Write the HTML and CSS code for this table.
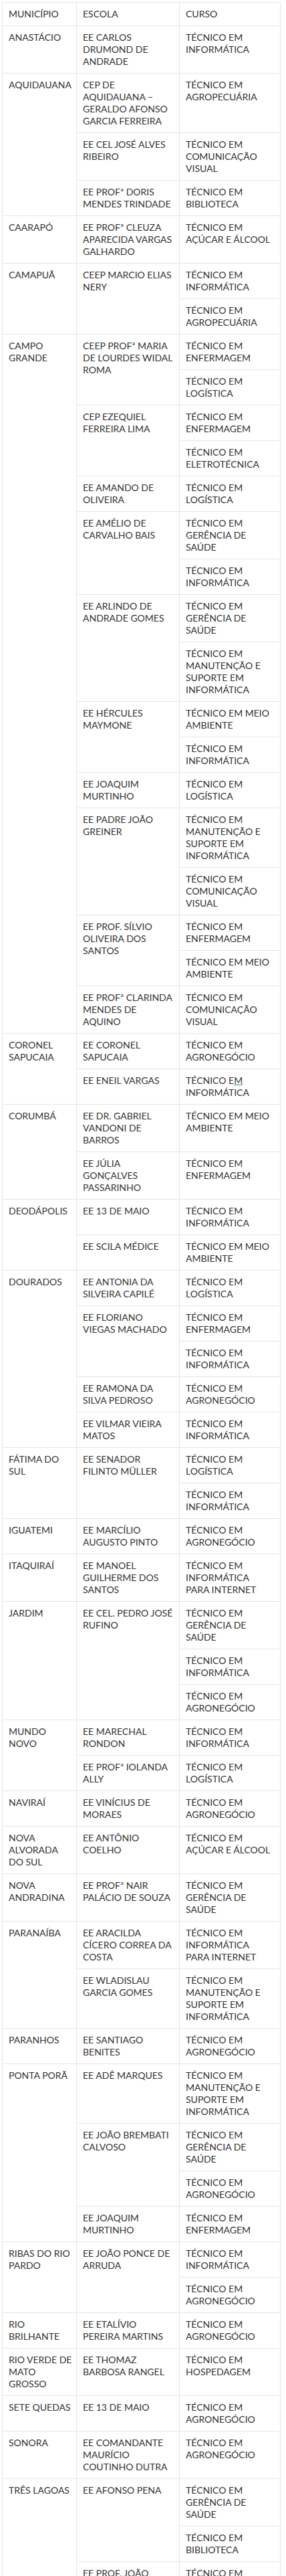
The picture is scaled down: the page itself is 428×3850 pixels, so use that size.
FILE: index.html
```html
<!DOCTYPE html>
<html lang="pt-BR">
<head>
<meta charset="utf-8">
<title>Cursos técnicos</title>
<link rel="stylesheet" href="styles.css">
</head>
<body>
<div class="wrap">
<table class="cursos">
<colgroup><col class="c1"><col class="c2"><col class="c3"></colgroup>
<tbody>
<tr><td>MUNICÍPIO</td><td>ESCOLA</td><td>CURSO</td></tr>
<tr><td>ANASTÁCIO</td><td>EE CARLOS<br>DRUMOND DE<br>ANDRADE</td><td>TÉCNICO EM<br>INFORMÁTICA</td></tr>
<tr><td rowspan="3">AQUIDAUANA</td><td>CEP DE<br>AQUIDAUANA –<br>GERALDO AFONSO<br>GARCIA FERREIRA</td><td>TÉCNICO EM<br>AGROPECUÁRIA</td></tr>
<tr><td>EE CEL JOSÉ ALVES<br>RIBEIRO</td><td>TÉCNICO EM<br>COMUNICAÇÃO<br>VISUAL</td></tr>
<tr><td>EE PROFª DORIS<br>MENDES TRINDADE</td><td>TÉCNICO EM<br>BIBLIOTECA</td></tr>
<tr><td>CAARAPÓ</td><td>EE PROFª CLEUZA<br>APARECIDA VARGAS<br>GALHARDO</td><td>TÉCNICO EM<br>AÇÚCAR E ÁLCOOL</td></tr>
<tr><td rowspan="2">CAMAPUÃ</td><td rowspan="2">CEEP MARCIO ELIAS<br>NERY</td><td>TÉCNICO EM<br>INFORMÁTICA</td></tr>
<tr><td>TÉCNICO EM<br>AGROPECUÁRIA</td></tr>
<tr><td rowspan="17">CAMPO<br>GRANDE</td><td rowspan="2">CEEP PROFª MARIA<br>DE LOURDES WIDAL<br>ROMA</td><td>TÉCNICO EM<br>ENFERMAGEM</td></tr>
<tr><td>TÉCNICO EM<br>LOGÍSTICA</td></tr>
<tr><td rowspan="2">CEP EZEQUIEL<br>FERREIRA LIMA</td><td>TÉCNICO EM<br>ENFERMAGEM</td></tr>
<tr><td>TÉCNICO EM<br>ELETROTÉCNICA</td></tr>
<tr><td>EE AMANDO DE<br>OLIVEIRA</td><td>TÉCNICO EM<br>LOGÍSTICA</td></tr>
<tr><td rowspan="2">EE AMÉLIO DE<br>CARVALHO BAIS</td><td>TÉCNICO EM<br>GERÊNCIA DE<br>SAÚDE</td></tr>
<tr><td>TÉCNICO EM<br>INFORMÁTICA</td></tr>
<tr><td rowspan="2">EE ARLINDO DE<br>ANDRADE GOMES</td><td>TÉCNICO EM<br>GERÊNCIA DE<br>SAÚDE</td></tr>
<tr><td>TÉCNICO EM<br>MANUTENÇÃO E<br>SUPORTE EM<br>INFORMÁTICA</td></tr>
<tr><td rowspan="2">EE HÉRCULES<br>MAYMONE</td><td>TÉCNICO EM MEIO<br>AMBIENTE</td></tr>
<tr><td>TÉCNICO EM<br>INFORMÁTICA</td></tr>
<tr><td>EE JOAQUIM<br>MURTINHO</td><td>TÉCNICO EM<br>LOGÍSTICA</td></tr>
<tr><td rowspan="2">EE PADRE JOÃO<br>GREINER</td><td>TÉCNICO EM<br>MANUTENÇÃO E<br>SUPORTE EM<br>INFORMÁTICA</td></tr>
<tr><td>TÉCNICO EM<br>COMUNICAÇÃO<br>VISUAL</td></tr>
<tr><td rowspan="2">EE PROF. SÍLVIO<br>OLIVEIRA DOS<br>SANTOS</td><td>TÉCNICO EM<br>ENFERMAGEM</td></tr>
<tr><td>TÉCNICO EM MEIO<br>AMBIENTE</td></tr>
<tr><td>EE PROFª CLARINDA<br>MENDES DE<br>AQUINO</td><td>TÉCNICO EM<br>COMUNICAÇÃO<br>VISUAL</td></tr>
<tr><td rowspan="2">CORONEL<br>SAPUCAIA</td><td>EE CORONEL<br>SAPUCAIA</td><td>TÉCNICO EM<br>AGRONEGÓCIO</td></tr>
<tr><td>EE ENEIL VARGAS</td><td>TÉCNICO E<a class="lnk" href="#">M</a><br>INFORMÁTICA</td></tr>
<tr><td rowspan="2">CORUMBÁ</td><td>EE DR. GABRIEL<br>VANDONI DE<br>BARROS</td><td>TÉCNICO EM MEIO<br>AMBIENTE</td></tr>
<tr><td>EE JÚLIA<br>GONÇALVES<br>PASSARINHO</td><td>TÉCNICO EM<br>ENFERMAGEM</td></tr>
<tr><td rowspan="2">DEODÁPOLIS</td><td>EE 13 DE MAIO</td><td>TÉCNICO EM<br>INFORMÁTICA</td></tr>
<tr><td>EE SCILA MÉDICE</td><td>TÉCNICO EM MEIO<br>AMBIENTE</td></tr>
<tr><td rowspan="5">DOURADOS</td><td>EE ANTONIA DA<br>SILVEIRA CAPILÉ</td><td>TÉCNICO EM<br>LOGÍSTICA</td></tr>
<tr><td rowspan="2">EE FLORIANO<br>VIEGAS MACHADO</td><td>TÉCNICO EM<br>ENFERMAGEM</td></tr>
<tr><td>TÉCNICO EM<br>INFORMÁTICA</td></tr>
<tr><td>EE RAMONA DA<br>SILVA PEDROSO</td><td>TÉCNICO EM<br>AGRONEGÓCIO</td></tr>
<tr><td>EE VILMAR VIEIRA<br>MATOS</td><td>TÉCNICO EM<br>INFORMÁTICA</td></tr>
<tr><td rowspan="2">FÁTIMA DO<br>SUL</td><td rowspan="2">EE SENADOR<br>FILINTO MÜLLER</td><td>TÉCNICO EM<br>LOGÍSTICA</td></tr>
<tr><td>TÉCNICO EM<br>INFORMÁTICA</td></tr>
<tr><td>IGUATEMI</td><td>EE MARCÍLIO<br>AUGUSTO PINTO</td><td>TÉCNICO EM<br>AGRONEGÓCIO</td></tr>
<tr><td>ITAQUIRAÍ</td><td>EE MANOEL<br>GUILHERME DOS<br>SANTOS</td><td>TÉCNICO EM<br>INFORMÁTICA<br>PARA INTERNET</td></tr>
<tr><td rowspan="3">JARDIM</td><td rowspan="3">EE CEL. PEDRO JOSÉ<br>RUFINO</td><td>TÉCNICO EM<br>GERÊNCIA DE<br>SAÚDE</td></tr>
<tr><td>TÉCNICO EM<br>INFORMÁTICA</td></tr>
<tr><td>TÉCNICO EM<br>AGRONEGÓCIO</td></tr>
<tr><td rowspan="2">MUNDO<br>NOVO</td><td>EE MARECHAL<br>RONDON</td><td>TÉCNICO EM<br>INFORMÁTICA</td></tr>
<tr><td>EE PROFª IOLANDA<br>ALLY</td><td>TÉCNICO EM<br>LOGÍSTICA</td></tr>
<tr><td>NAVIRAÍ</td><td>EE VINÍCIUS DE<br>MORAES</td><td>TÉCNICO EM<br>AGRONEGÓCIO</td></tr>
<tr><td>NOVA<br>ALVORADA<br>DO SUL</td><td>EE ANTÔNIO<br>COELHO</td><td>TÉCNICO EM<br>AÇÚCAR E ÁLCOOL</td></tr>
<tr><td>NOVA<br>ANDRADINA</td><td>EE PROFª NAIR<br>PALÁCIO DE SOUZA</td><td>TÉCNICO EM<br>GERÊNCIA DE<br>SAÚDE</td></tr>
<tr><td rowspan="2">PARANAÍBA</td><td>EE ARACILDA<br>CÍCERO CORREA DA<br>COSTA</td><td>TÉCNICO EM<br>INFORMÁTICA<br>PARA INTERNET</td></tr>
<tr><td>EE WLADISLAU<br>GARCIA GOMES</td><td>TÉCNICO EM<br>MANUTENÇÃO E<br>SUPORTE EM<br>INFORMÁTICA</td></tr>
<tr><td>PARANHOS</td><td>EE SANTIAGO<br>BENITES</td><td>TÉCNICO EM<br>AGRONEGÓCIO</td></tr>
<tr><td rowspan="4">PONTA PORÃ</td><td>EE ADÊ MARQUES</td><td>TÉCNICO EM<br>MANUTENÇÃO E<br>SUPORTE EM<br>INFORMÁTICA</td></tr>
<tr><td rowspan="2">EE JOÃO BREMBATI<br>CALVOSO</td><td>TÉCNICO EM<br>GERÊNCIA DE<br>SAÚDE</td></tr>
<tr><td>TÉCNICO EM<br>AGRONEGÓCIO</td></tr>
<tr><td>EE JOAQUIM<br>MURTINHO</td><td>TÉCNICO EM<br>ENFERMAGEM</td></tr>
<tr><td rowspan="2">RIBAS DO RIO<br>PARDO</td><td rowspan="2">EE JOÃO PONCE DE<br>ARRUDA</td><td>TÉCNICO EM<br>INFORMÁTICA</td></tr>
<tr><td>TÉCNICO EM<br>AGRONEGÓCIO</td></tr>
<tr><td>RIO<br>BRILHANTE</td><td>EE ETALÍVIO<br>PEREIRA MARTINS</td><td>TÉCNICO EM<br>AGRONEGÓCIO</td></tr>
<tr><td>RIO VERDE DE<br>MATO<br>GROSSO</td><td>EE THOMAZ<br>BARBOSA RANGEL</td><td>TÉCNICO EM<br>HOSPEDAGEM</td></tr>
<tr><td>SETE QUEDAS</td><td>EE 13 DE MAIO</td><td>TÉCNICO EM<br>AGRONEGÓCIO</td></tr>
<tr><td>SONORA</td><td>EE COMANDANTE<br>MAURÍCIO<br>COUTINHO DUTRA</td><td>TÉCNICO EM<br>AGRONEGÓCIO</td></tr>
<tr><td rowspan="3">TRÊS LAGOAS</td><td rowspan="2">EE AFONSO PENA</td><td>TÉCNICO EM<br>GERÊNCIA DE<br>SAÚDE</td></tr>
<tr><td>TÉCNICO EM<br>BIBLIOTECA</td></tr>
<tr><td>EE PROF. JOÃO<br>DANTAS FILGUEIRAS</td><td>TÉCNICO EM<br>INFORMÁTICA</td></tr>
</tbody>
</table>
</div>
</body>
</html>
```

FILE: styles.css
```css
html, body {
  margin: 0;
  padding: 0;
  background: #ffffff;
}

.wrap {
  padding: 3px 0 0 3px;
}

.cursos {
  border-collapse: collapse;
  table-layout: fixed;
  width: 416px;
  font-family: Lato, "Open Sans", "Liberation Sans", sans-serif;
  font-size: 14px;
  line-height: 18px;
  color: #333333;
}

.c1 { width: 111px; }
.c2 { width: 154px; }
.c3 { width: 151px; }

.cursos td {
  border: 1px solid #e6e6e6;
  padding: 8px 9px;
  vertical-align: top;
  text-align: left;
  white-space: nowrap;
}

.lnk {
  color: inherit;
  text-decoration: underline;
  text-decoration-color: #2a8bb5;
}
```
